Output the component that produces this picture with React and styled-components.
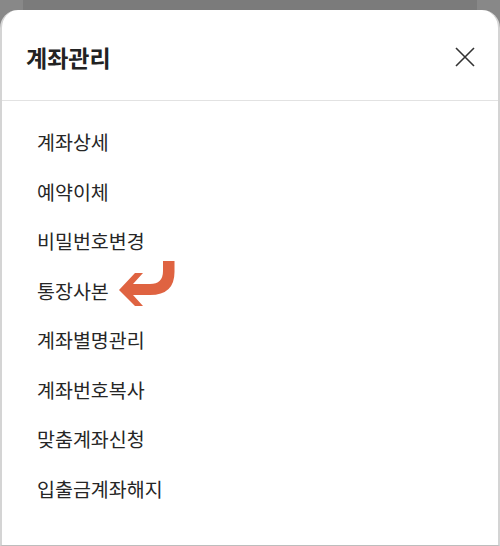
import React from "react";
import styled, { createGlobalStyle } from "styled-components";

const Global = createGlobalStyle`
  html, body { margin: 0; padding: 0; background: #888888; }
  body { font-family: "Noto Sans CJK KR", "Noto Sans", sans-serif; }
`;

const Screen = styled.div`
  width: 500px;
  height: 546px;
  display: flex;
  flex-direction: column;
  overflow: hidden;
  background: #888888;
`;

const Backdrop = styled.div`
  height: 10px;
  padding: 0 23px;
  display: flex;
`;

const BackCard = styled.div`
  flex: 1;
  background: #7b7b7b;
`;

const Sheet = styled.div`
  flex: 1;
  display: flex;
  flex-direction: column;
  background: #ffffff;
  border-radius: 18px 18px 0 0;
  border-left: 2px solid #d4d4d4;
  border-right: 2px solid #d4d4d4;
  border-bottom: 1px solid #bdbdbd;
  box-sizing: border-box;
`;

const Header = styled.div`
  height: 91px;
  box-sizing: border-box;
  padding: 4px 23px 0 24px;
  display: flex;
  align-items: center;
  justify-content: space-between;
  border-bottom: 1px solid #e2e2e2;
`;

const Title = styled.h1`
  margin: 0;
  font-size: 23px;
  font-weight: 700;
  color: #222222;
  letter-spacing: 0;
`;

const CloseButton = styled.button`
  width: 20px;
  height: 20px;
  padding: 0;
  border: none;
  background: none;
  display: flex;
  align-items: center;
  justify-content: center;
  cursor: pointer;
`;

const List = styled.ul`
  list-style: none;
  margin: 0;
  padding: 16px 0 0 35px;
`;

const Item = styled.li`
  position: relative;
  height: 49.5px;
  display: flex;
  align-items: center;
  font-size: 19.5px;
  color: #262626;
  letter-spacing: 0;
`;

const Pointer = styled.svg`
  position: absolute;
  left: 78px;
  top: -8px;
  width: 64px;
  height: 52px;
`;

const items = [
  "계좌상세",
  "예약이체",
  "비밀번호변경",
  "통장사본",
  "계좌별명관리",
  "계좌번호복사",
  "맞춤계좌신청",
  "입출금계좌해지",
];

export default function App() {
  return (
    <>
      <Global />
      <Screen>
        <Backdrop>
          <BackCard />
        </Backdrop>
        <Sheet>
          <Header>
            <Title>계좌관리</Title>
            <CloseButton aria-label="닫기">
              <svg width="20" height="20" viewBox="0 0 20 20">
                <path d="M1 1 L19 19 M19 1 L1 19" stroke="#333" strokeWidth="1.6" fill="none" />
              </svg>
            </CloseButton>
          </Header>
          <List>
            {items.map((t) => (
              <Item key={t}>
                {t}
                {t === "통장사본" && (
                  <Pointer viewBox="0 0 64 52">
                    <path
                      d="M4 32 L20 15 L28 15 L18 26 L35 26 Q48 26 48 13 L48 3 L59.5 3 L59.5 14 Q59.5 37 35 37 L18 37 L28 48 L20 48 Z"
                      fill="#df6341"
                    />
                  </Pointer>
                )}
              </Item>
            ))}
          </List>
        </Sheet>
      </Screen>
    </>
  );
}
